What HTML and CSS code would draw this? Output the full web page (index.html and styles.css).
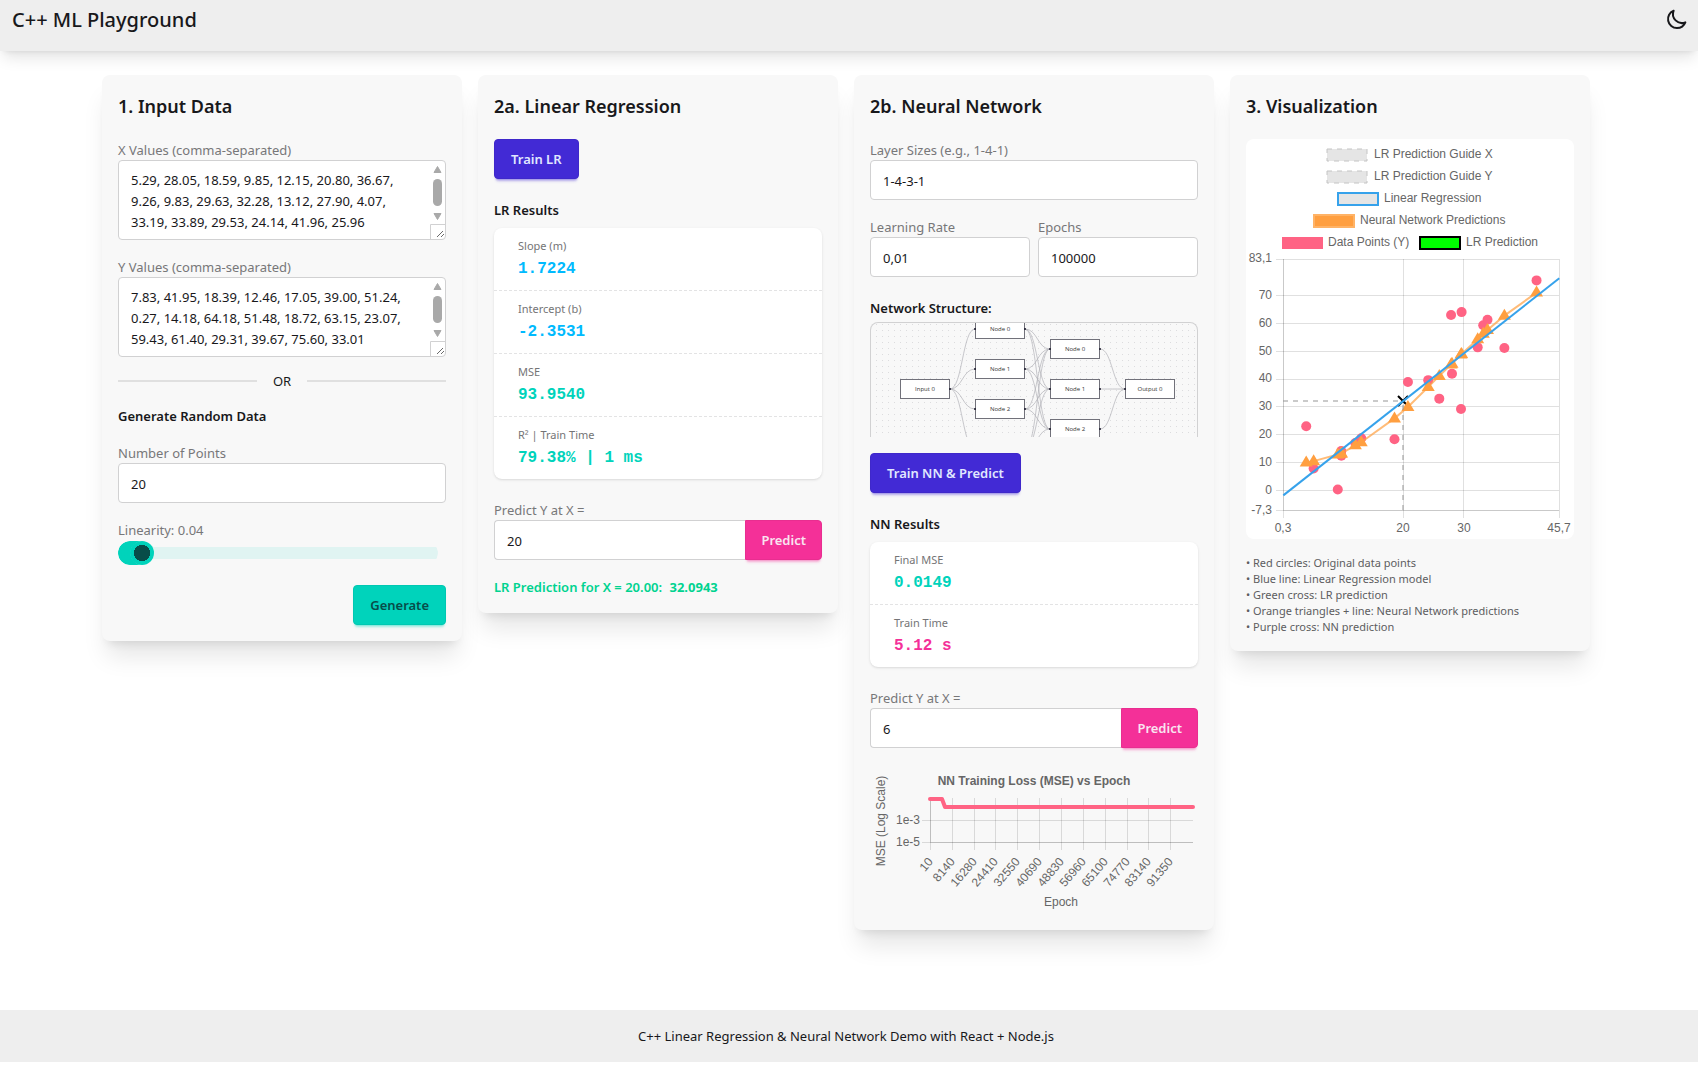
FILE: index.html
```html
<!DOCTYPE html>
<html lang="en">
<head>
  <meta charset="utf-8">
  <meta name="viewport" content="width=device-width, initial-scale=1">
  <title>C++ ML Playground</title>
  <link rel="stylesheet" href="styles.css">
</head>
<body>
  <header class="navbar">
    <h1 class="brand">C++ ML Playground</h1>
    <button class="theme-toggle" type="button" aria-label="Switch to dark theme">
      <svg width="24" height="24" viewBox="0 0 24 24" fill="none" stroke="currentColor" stroke-width="2" stroke-linecap="round" stroke-linejoin="round"><path d="M20.354 15.354A9 9 0 018.646 3.646 9.003 9.003 0 0012 21a9.003 9.003 0 008.354-5.646z"/></svg>
    </button>
  </header>

  <main class="board">
    <section class="card">
      <h2 class="card-title">1. Input Data</h2>
      <div class="field">
        <label class="label" for="x-values">X Values (comma-separated)</label>
        <div class="textarea-wrap">
          <textarea class="control textarea" id="x-values">5.29, 28.05, 18.59, 9.85, 12.15, 20.80, 36.67, 9.26, 9.83, 29.63, 32.28, 13.12, 27.90, 4.07, 33.19, 33.89, 29.53, 24.14, 41.96, 25.96</textarea>
          <svg class="scrollbar" width="15" height="78" viewBox="0 0 15 78" aria-hidden="true"><path d="M7.500 5.500L11 11.500H4z M7.500 58.500L11 52.500H4z" fill="#a9a9a9" stroke="#a9a9a9" stroke-linejoin="round"/><rect x="3" y="18" width="9" height="27" rx="4.500" fill="#a9a9a9"/><path d="M.5 78V63.500H15" fill="none" stroke="#d1d1d2"/><path d="M7 76L13 70M11 76L14 73" stroke="#444" stroke-width=".8"/></svg>
        </div>
      </div>
      <div class="field">
        <label class="label" for="y-values">Y Values (comma-separated)</label>
        <div class="textarea-wrap">
          <textarea class="control textarea" id="y-values">7.83, 41.95, 18.39, 12.46, 17.05, 39.00, 51.24, 0.27, 14.18, 64.18, 51.48, 18.72, 63.15, 23.07, 59.43, 61.40, 29.31, 39.67, 75.60, 33.01</textarea>
          <svg class="scrollbar" width="15" height="78" viewBox="0 0 15 78" aria-hidden="true"><path d="M7.500 5.500L11 11.500H4z M7.500 58.500L11 52.500H4z" fill="#a9a9a9" stroke="#a9a9a9" stroke-linejoin="round"/><rect x="3" y="18" width="9" height="27" rx="4.500" fill="#a9a9a9"/><path d="M.5 78V63.500H15" fill="none" stroke="#d1d1d2"/><path d="M7 76L13 70M11 76L14 73" stroke="#444" stroke-width=".8"/></svg>
        </div>
      </div>
      <div class="divider">OR</div>
      <h3 class="subtitle">Generate Random Data</h3>
      <div class="field">
        <label class="label" for="points">Number of Points</label>
        <input class="control" id="points" type="text" inputmode="numeric" value="20">
      </div>
      <div class="field">
        <label class="label" for="linearity">Linearity: 0.04</label>
        <input class="range" id="linearity" type="range" min="0" max="1" step="0.01" value="0.04">
      </div>
      <div class="actions">
        <button class="btn btn-accent" type="button">Generate</button>
      </div>
    </section>

    <section class="card">
      <h2 class="card-title">2a. Linear Regression</h2>
      <button class="btn btn-primary" type="button">Train LR</button>
      <div class="group">
        <h3 class="subtitle">LR Results</h3>
        <dl class="stats">
          <div class="stat"><dt>Slope (m)</dt><dd class="info">1.7224</dd></div>
          <div class="stat"><dt>Intercept (b)</dt><dd class="info">-2.3531</dd></div>
          <div class="stat"><dt>MSE</dt><dd class="accent">93.9540</dd></div>
          <div class="stat"><dt>R² | Train Time</dt><dd class="accent">79.38% | 1 ms</dd></div>
        </dl>
      </div>
      <div class="group">
        <label class="label" for="lr-x">Predict Y at X =</label>
        <div class="join">
          <input class="control" id="lr-x" type="text" inputmode="decimal" value="20">
          <button class="btn btn-secondary" type="button">Predict</button>
        </div>
      </div>
      <p class="prediction">LR Prediction for X = 20.00: <strong>32.0943</strong></p>
    </section>

    <section class="card">
      <h2 class="card-title">2b. Neural Network</h2>
      <div class="field">
        <label class="label" for="layers">Layer Sizes (e.g., 1-4-1)</label>
        <input class="control" id="layers" type="text" value="1-4-3-1">
      </div>
      <div class="field-row">
        <div>
          <label class="label" for="rate">Learning Rate</label>
          <input class="control" id="rate" type="text" inputmode="decimal" value="0,01">
        </div>
        <div>
          <label class="label" for="epochs">Epochs</label>
          <input class="control" id="epochs" type="text" inputmode="numeric" value="100000">
        </div>
      </div>
      <div class="group">
        <h3 class="subtitle">Network Structure:</h3>
        <div class="network">
          <svg class="plot" viewBox="0 0 326 114" role="img" aria-label="Network with layers of 1, 4, 3 and 1 nodes">
            <defs>
              <pattern id="dots" x="5" y="1" width="6" height="6" patternUnits="userSpaceOnUse"><rect x="0" y="0" width="1" height="1" fill="#dcdcde"/></pattern>
            </defs>
            <rect width="326" height="114" fill="url(#dots)"/>
            <g id="edges" fill="none" stroke="#b1b1b7" stroke-opacity=".7"></g>
            <g id="nodes"></g>
          </svg>
        </div>
      </div>
      <button class="btn btn-primary train-nn" type="button">Train NN &amp; Predict</button>
      <div class="group">
        <h3 class="subtitle">NN Results</h3>
        <dl class="stats">
          <div class="stat"><dt>Final MSE</dt><dd class="accent">0.0149</dd></div>
          <div class="stat"><dt>Train Time</dt><dd class="secondary">5.12 s</dd></div>
        </dl>
      </div>
      <div class="group">
        <label class="label" for="nn-x">Predict Y at X =</label>
        <div class="join">
          <input class="control" id="nn-x" type="text" inputmode="decimal" value="6">
          <button class="btn btn-secondary" type="button">Predict</button>
        </div>
      </div>
      <svg class="plot loss" viewBox="0 0 328 150" role="img" aria-label="NN training loss by epoch">
        <text x="164" y="21" text-anchor="middle" font-weight="bold">NN Training Loss (MSE) vs Epoch</text>
        <text transform="translate(15 57) rotate(-90)" text-anchor="middle">MSE (Log Scale)</text>
        <g text-anchor="end"><text x="50" y="60">1e-3</text><text x="50" y="82">1e-5</text></g>
        <g stroke="#000" stroke-opacity=".12"><path d="M52 56.5H323M52 78.5H323"/><path id="loss-ticks"/></g>
        <path d="M60.5 34V78.5H323" fill="none" stroke="#000" stroke-opacity=".12"/>
        <g id="loss-labels" text-anchor="end"></g>
        <path d="M60 35H72L75 43H323" fill="none" stroke="#ff6384" stroke-width="4" stroke-linecap="round" stroke-linejoin="round"/>
        <text x="191" y="142" text-anchor="middle">Epoch</text>
      </svg>
    </section>

    <section class="card">
      <h2 class="card-title">3. Visualization</h2>
      <div class="chart-box">
        <svg class="plot" viewBox="0 0 328 400" role="img" aria-label="Data points with linear regression and neural network predictions">
          <g fill="#e5e5e5" stroke="#c4c4c4" stroke-dasharray="5 5">
            <rect x="81" y="10" width="40" height="12"/><rect x="81" y="32" width="40" height="12"/>
          </g>
          <rect x="92" y="54" width="40" height="12" fill="#e5e5e5" stroke="#36a2eb" stroke-width="2"/>
          <rect x="68" y="76" width="40" height="12" fill="#ff9f40" stroke="#ffb366" stroke-width="2"/>
          <rect x="36" y="98" width="41" height="12" fill="#ff6384"/>
          <rect x="174" y="98" width="40" height="12" fill="#0f0" stroke="#000" stroke-width="2"/>
          <text x="128" y="19">LR Prediction Guide X</text>
          <text x="128" y="41">LR Prediction Guide Y</text>
          <text x="138" y="63">Linear Regression</text>
          <text x="114" y="85">Neural Network Predictions</text>
          <text x="82" y="107">Data Points (Y)</text>
          <text x="220" y="107">LR Prediction</text>
          <path fill="none" stroke="#000" stroke-opacity=".12" d="M30 120.5H313M30 156.5H313M30 184.5H313M30 212.5H313M30 240.5H313M30 267.5H313M30 295.5H313M30 323.5H313M30 351.5H313M30 371.5H313M37.5 120V379M157.5 120V379M217.5 120V379M313.5 120V379"/>
          <path fill="none" stroke="#000" stroke-opacity=".1" d="M37.5 120V371.5H313"/>
          <g text-anchor="end">
            <text x="26" y="123">83,1</text><text x="26" y="160">70</text><text x="26" y="188">60</text><text x="26" y="216">50</text><text x="26" y="243">40</text><text x="26" y="271">30</text><text x="26" y="299">20</text><text x="26" y="327">10</text><text x="26" y="355">0</text><text x="26" y="375">-7,3</text>
          </g>
          <g text-anchor="middle">
            <text x="37" y="393">0,3</text><text x="157" y="393">20</text><text x="218" y="393">30</text><text x="313" y="393">45,7</text>
          </g>
          <path d="M152 257L162 267M162 257L152 267" stroke="#000" stroke-width="2"/>
          <g id="samples" fill="#ff6384"></g>
          <g id="predictions" fill="#ff9f40"></g>
          <path id="fit" fill="none" stroke="#36a2eb" stroke-width="2"/>
          <path d="M157 371V262M37 262H157" fill="none" stroke="#969696" stroke-opacity=".5" stroke-width="2" stroke-dasharray="5 5"/>
        </svg>
      </div>
      <ul class="notes">
        <li>• Red circles: Original data points</li>
        <li>• Blue line: Linear Regression model</li>
        <li>• Green cross: LR prediction</li>
        <li>• Orange triangles + line: Neural Network predictions</li>
        <li>• Purple cross: NN prediction</li>
      </ul>
    </section>
  </main>

  <footer class="footer">C++ Linear Regression &amp; Neural Network Demo with React + Node.js</footer>
  <script src="charts.js"></script>
</body>
</html>
```

FILE: styles.css
```css
*, *::before, *::after { box-sizing: border-box; }

body {
  margin: 0;
  min-height: 100vh;
  padding-bottom: 23px;
  display: flex;
  flex-direction: column;
  background: #fff;
  color: #18181b;
  font-family: "Noto Sans", "Open Sans", sans-serif;
  font-size: 13px;
  line-height: 21px;
}

h1, h2, h3, p, ul, dl, dd { margin: 0; padding: 0; }

.navbar {
  display: flex;
  align-items: flex-start;
  justify-content: space-between;
  height: 51px;
  padding: 6px 9px 0 12px;
  background: #eee;
  box-shadow: 0 10px 15px -3px rgba(0, 0, 0, .1), 0 4px 6px -4px rgba(0, 0, 0, .1);
}
.brand { font-size: 20px; font-weight: 500; line-height: 28px; }
.theme-toggle { display: flex; padding: 1px 0; border: 0; background: none; color: inherit; }

.board {
  flex: 1;
  display: grid;
  grid-template-columns: repeat(4, minmax(0, 1fr));
  align-items: start;
  gap: 16px;
  padding: 24px 108px 24px 102px;
}

.card {
  padding: 16px;
  border-radius: 8px;
  background: #f8f8f8;
  box-shadow: 0 20px 25px -5px rgba(0, 0, 0, .1), 0 8px 10px -6px rgba(0, 0, 0, .1);
}
.card-title { margin-bottom: 18px; font-size: 18px; font-weight: 600; line-height: 30px; }
.subtitle { height: 21px; font-size: 13px; font-weight: 600; line-height: 23px; }

.field { margin-bottom: 16px; }
.field-row { display: grid; grid-template-columns: 1fr 1fr; gap: 8px; }
.group { margin-top: 20px; }
.label { display: block; height: 21px; line-height: 23px; color: #777779; }

.control {
  display: block;
  width: 100%;
  height: 40px;
  padding: 2px 12px 0;
  border: 1px solid #d1d1d2;
  border-radius: 4px;
  background: #fff;
  color: #18181b;
  font: inherit;
}
.textarea-wrap { position: relative; }
.textarea { height: 80px; padding: 9px 28px 6px 12px; overflow: hidden; resize: none; }
.scrollbar { position: absolute; top: 1px; right: 1px; }

.divider { display: flex; align-items: center; gap: 16px; height: 16px; margin: 16px 0; line-height: 23px; }
.divider::before, .divider::after { content: ""; flex: 1; height: 2px; background: #e0e0e0; }
.divider + .subtitle { margin-bottom: 16px; }

.range {
  appearance: none;
  display: block;
  width: 100%;
  max-width: 320px;
  height: 24px;
  margin: 1px 0 0;
  border-radius: 12px;
  background: none;
  overflow: hidden;
}
.range::-webkit-slider-runnable-track {
  height: 24px;
  border-radius: 12px;
  background: linear-gradient(#e0f4f2, #e0f4f2) center / 100% 12px no-repeat;
}
.range::-webkit-slider-thumb {
  appearance: none;
  width: 24px;
  height: 24px;
  border-radius: 12px;
  background: radial-gradient(circle, #084d49 8px, #00d3bb 8px);
  box-shadow: -3px 0 #00d3bb, -6px 0 #00d3bb, -9px 0 #00d3bb, -12px 0 #00d3bb;
}

.actions { display: flex; justify-content: flex-end; margin-top: 20px; }
.btn {
  height: 40px;
  padding: 1px 16px 0;
  border: 1px solid;
  border-radius: 4px;
  font: inherit;
  font-weight: 600;
  white-space: nowrap;
}
.btn-primary { background: #422ad5; border-color: #3f28ca; color: #e0e7ff; box-shadow: 0 3px 2px -2px #422ad54d, 0 4px 3px -2px #422ad54d; }
.btn-secondary { padding: 1px 15px 0; background: #f43098; border-color: #e82e90; color: #f9e4f0; box-shadow: 0 3px 2px -2px #f430984d, 0 4px 3px -2px #f430984d; }
.btn-accent { background: #00d3bb; border-color: #00c8b2; color: #084d49; box-shadow: 0 3px 2px -2px #00d3bb4d, 0 4px 3px -2px #00d3bb4d; }
.train-nn { margin-top: 16px; }

.join { display: flex; }
.join .control { flex: 1; min-width: 0; border-right: 0; border-radius: 4px 0 0 4px; }
.join .btn { border-radius: 0 4px 4px 0; }

.stats {
  margin-top: 8px;
  border-radius: 8px;
  background: #fff;
  box-shadow: 0 1px 3px rgba(0, 0, 0, .1), 0 1px 2px -1px rgba(0, 0, 0, .1);
}
.stat { padding: 10px 24px 6px; }
.stat + .stat { border-top: 1px dashed #e3e3e4; }
.stat dt { font-size: 11px; line-height: 16px; color: #747476; }
.stat dd { font: bold 16px/30px "Liberation Mono", monospace; }
.info { color: #00bafe; }
.accent { color: #00d3bb; }
.secondary { color: #f43098; }

.prediction { height: 21px; margin-top: 16px; color: #00d390; font-weight: 600; line-height: 23px; }
.prediction strong { margin-left: 4px; font-weight: 700; }

.network {
  height: 115px;
  margin-top: 4px;
  border: 1px solid #d1d1d2;
  border-bottom: 0;
  border-radius: 8px 8px 0 0;
  overflow: hidden;
}

.plot { display: block; width: 100%; height: auto; fill: #666; font: 12px "Liberation Sans", Arial, sans-serif; }
.network .plot { font: 6px "Open Sans", sans-serif; }
.loss { margin-top: 16px; }
.chart-box { border-radius: 8px; background: #fff; }

.notes { margin-top: 16px; list-style: none; font-size: 11px; line-height: 16px; color: #5d5d5f; }

.footer {
  padding: 16px 6px 15px 0;
  background: #eee;
  text-align: center;
}
```

FILE: charts.js
```js
const el = (id) => document.getElementById(id);
const numbers = (id) => el(id).value.split(',').map(Number);

// Scatter plot scales
const px = (x) => 37.3 + (x - 0.3) * 6.079;
const py = (y) => 351.3 - y * 2.7766;

const ys = numbers('y-values');
el('samples').innerHTML = numbers('x-values')
  .map((x, i) => `<circle cx="${px(x)}" cy="${py(ys[i])}" r="5"/>`).join('');

const predicted = [
  [4.07, 10], [5.29, 10.5], [9.26, 12.9], [9.83, 13.2], [9.85, 13.3], [12.15, 16.2],
  [13.12, 17.3], [18.59, 25.9], [20.8, 30], [24.14, 37.2], [25.96, 41.2], [27.9, 45.3],
  [28.05, 45.6], [29.53, 48.9], [29.63, 49.1], [32.28, 54.4], [33.19, 56.4],
  [33.89, 57.7], [36.67, 62.9], [41.96, 71.2],
];
const linePoints = predicted.map(([x, y]) => `${px(x)},${py(y)}`).join(' ');
el('predictions').innerHTML =
  `<polyline points="${linePoints}" fill="none" stroke="#ff9f40" stroke-opacity=".7" stroke-width="2"/>` +
  predicted.map(([x, y]) => `<path d="M${px(x)} ${py(y) - 7}l6.500 11h-13z"/>`).join('');

const fit = (x) => 1.7224 * x - 2.3531;
el('fit').setAttribute('d', `M${px(0.3)} ${py(fit(0.3))}L${px(45.7)} ${py(fit(45.7))}`);

// Loss chart ticks
const ticks = [[60.5, 10], [82.5, 8140], [104.5, 16280], [125.5, 24410], [147.5, 32550], [169.5, 40690],
  [191.5, 48830], [213.5, 56960], [235.5, 65100], [257.5, 74770], [278.5, 83140], [300.5, 91350]];
el('loss-ticks').setAttribute('d', ticks.map(([x]) => `M${x} 34V86`).join(''));
el('loss-labels').innerHTML = ticks
  .map(([x, label]) => `<text transform="translate(${x + 3} 98) rotate(-50)">${label}</text>`).join('');

// Network diagram: x of each column and centre y of its nodes
const viewHeight = 114;
const columns = [
  { x: 29, ys: [66], name: 'Input' },
  { x: 104, ys: [6, 46, 86, 126], name: 'Node' },
  { x: 179, ys: [26, 66, 106], name: 'Node' },
  { x: 254, ys: [66], name: 'Output' },
];
let edges = '';
let nodes = '';
columns.forEach((col, c) => {
  const next = columns[c + 1];
  col.ys.forEach((y, i) => {
    if (y < viewHeight) {
      nodes += `<rect x="${col.x + 0.5}" y="${y - 9.5}" width="49" height="19" fill="#fff" stroke="#71717a"/>` +
        `<text x="${col.x + 25}" y="${y + 2}" text-anchor="middle" fill="#333">${col.name} ${i}</text>`;
      if (c > 0) nodes += `<circle cx="${col.x}" cy="${y}" r="1" fill="#1a192b"/>`;
      if (next) nodes += `<circle cx="${col.x + 50}" cy="${y}" r="1" fill="#1a192b"/>`;
    }
    if (!next) return;
    const x1 = col.x + 50;
    const mid = (x1 + next.x) / 2;
    next.ys.forEach((y2) => { edges += `<path d="M${x1} ${y}C${mid} ${y} ${mid} ${y2} ${next.x} ${y2}"/>`; });
  });
});
el('edges').innerHTML = edges;
el('nodes').innerHTML = nodes;
```
